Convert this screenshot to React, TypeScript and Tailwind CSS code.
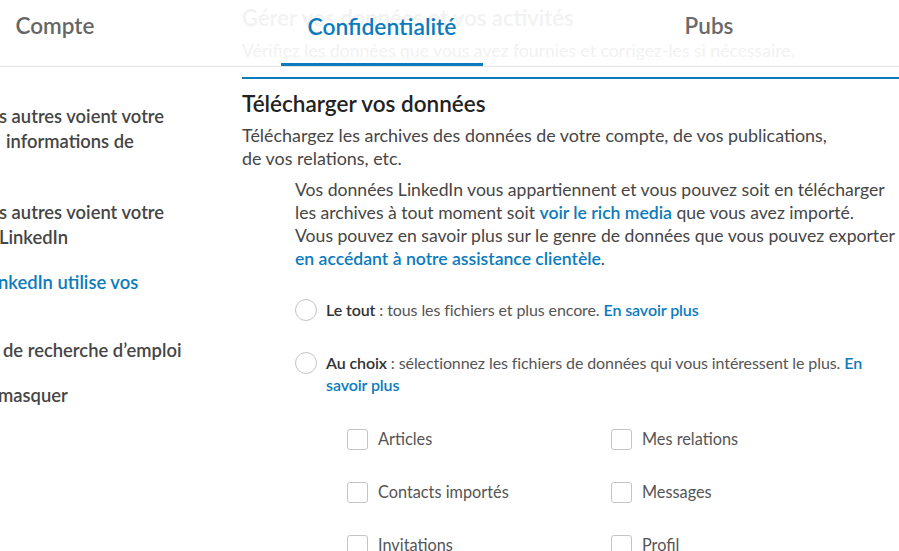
import { ReactNode } from "react";

const blue = "text-[#0b7bbd]";

function Radio({ children }: { children: ReactNode }) {
  return (
    <div className="flex items-start gap-[9px]">
      <span className="h-[22px] w-[22px] shrink-0 rounded-full border border-[#c4c4c4] bg-white" />
      <p className="text-[16px] leading-[22px] tracking-[-0.1px] text-[#555]">{children}</p>
    </div>
  );
}

function Check({ label }: { label: string }) {
  return (
    <div className="flex items-center gap-[10px]">
      <span className="h-[21px] w-[21px] shrink-0 rounded-[3px] border border-[#c4c4c4] bg-white" />
      <span className="text-[16.3px] leading-[22px] text-[#555]">{label}</span>
    </div>
  );
}

export default function App() {
  return (
    <div className="relative h-[551px] w-[899px] overflow-hidden bg-white font-['Lato','Liberation_Sans',sans-serif]">
      {/* faded page header sitting behind the tab bar */}
      <div className="absolute left-[242px] top-[4px] whitespace-nowrap text-[#f2f2f2]">
        <p className="text-[22px] font-semibold leading-[28px]">Gérer vos données et vos activités</p>
        <p className="mt-[7px] text-[17.6px] leading-[24px]">
          Vérifiez les données que vous avez fournies et corrigez-les si nécessaire.
        </p>
      </div>

      <nav className="relative flex h-[67px] border-b border-[#e3e3e3]">
        <div className="w-[110px] pt-[12px] text-center text-[22.5px] font-semibold leading-[28px] text-[#666]">
          Compte
        </div>
        <div className={`ml-[171px] h-[66px] w-[202px] border-b-[3px] border-[#0b7bbd] pt-[12px] text-center text-[22.8px] font-semibold leading-[28px] ${blue}`}>
          Confidentialité
        </div>
        <div className="ml-[125px] w-[202px] pt-[12px] text-center text-[22.5px] font-semibold leading-[28px] text-[#6a6a6a]">
          Pubs
        </div>
      </nav>

      <div className="flex">
        <aside className="w-[242px] shrink-0 whitespace-nowrap pt-[37px] text-[18.4px] font-semibold leading-[25px] text-[#454545]">
          <p className="-ml-[1px]">s autres voient votre</p>
          <p className="pl-[6px]">informations de</p>
          <p className="-ml-[1px] mt-[46px]">s autres voient votre</p>
          <p className="-ml-[1px]">LinkedIn</p>
          <p className={`-ml-[2px] mt-[20px] ${blue}`}>nkedIn utilise vos</p>
          <p className="mt-[43px] pl-[3px]">de recherche d’emploi</p>
          <p className="-ml-[2px] mt-[20px]">masquer</p>
        </aside>

        <main className="mt-[10px] flex-1 border-t-2 border-[#0b7bbd] pt-[11px]">
          <h2 className="text-[22.5px] font-semibold leading-[28px] text-[#222]">Télécharger vos données</h2>
          <p className="mt-[6px] whitespace-nowrap text-[17.9px] leading-[23px] text-[#464646]">
            Téléchargez les archives des données de votre compte, de vos publications,
            <br />
            de vos relations, etc.
          </p>

          <p className="ml-[53px] mt-[8px] whitespace-nowrap text-[17.6px] leading-[23px] text-[#464646]">
            Vos données LinkedIn vous appartiennent et vous pouvez soit en télécharger
            <br />
            les archives à tout moment soit <span className={`font-semibold ${blue}`}>voir le rich media</span> que
            vous avez importé.
            <br />
            Vous pouvez en savoir plus sur le genre de données que vous pouvez exporter
            <br />
            <span className={`font-semibold ${blue}`}>en accédant à notre assistance clientèle</span>.
          </p>

          <div className="ml-[53px] mt-[29px]">
            <Radio>
              <b className="font-semibold text-[#333]">Le tout</b> : tous les fichiers et plus encore.{" "}
              <span className={`font-semibold ${blue}`}>En savoir plus</span>
            </Radio>
          </div>
          <div className="ml-[53px] mt-[31px]">
            <Radio>
              <b className="font-semibold text-[#333]">Au choix</b> : sélectionnez les fichiers de données qui vous
              intéressent le plus. <span className={`font-semibold ${blue}`}>En</span>
              <br />
              <span className={`font-semibold ${blue}`}>savoir plus</span>
            </Radio>
          </div>

          <div className="ml-[105px] mt-[32px] grid grid-cols-[264px_1fr] gap-y-[31px]">
            <Check label="Articles" />
            <Check label="Mes relations" />
            <Check label="Contacts importés" />
            <Check label="Messages" />
            <Check label="Invitations" />
            <Check label="Profil" />
          </div>
        </main>
      </div>
    </div>
  );
}
